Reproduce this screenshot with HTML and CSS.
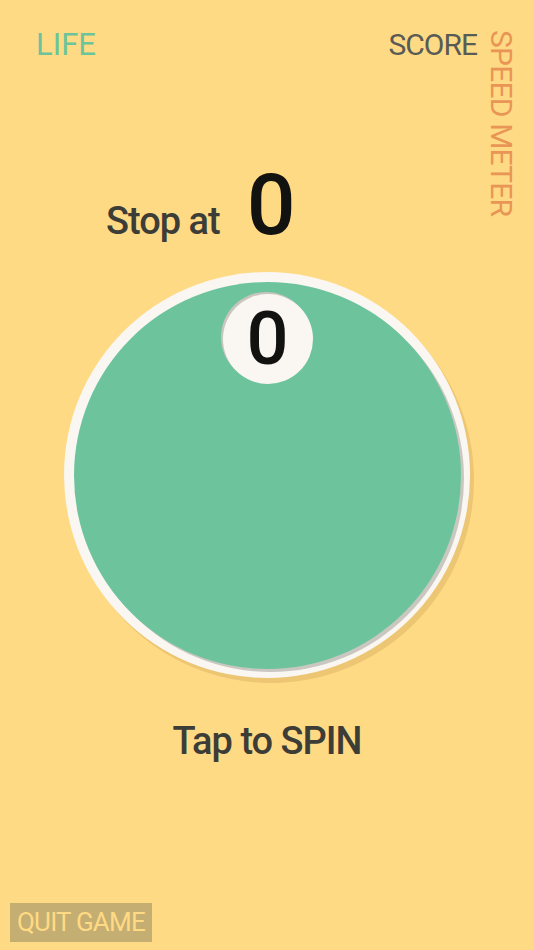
FILE: index.html
```
<!DOCTYPE html>
<html>
<head>
<meta charset="utf-8">
<link rel="stylesheet" href="styles.css">
</head>
<body>
<div class="screen">
  <header class="top">
    <div class="life">LIFE</div>
    <div class="right">
      <div class="score">SCORE</div>
      <div class="speed">SPEED METER</div>
    </div>
  </header>
  <div class="stop-row">
    <span class="stop-label">Stop at</span>
    <span class="stop-num">0</span>
  </div>
  <div class="wheel">
    <div class="wheel-face">
      <div class="ball">0</div>
    </div>
  </div>
  <div class="tap">Tap to SPIN</div>
  <div class="footer">
    <button class="quit">QUIT GAME</button>
  </div>
</div>
</body>
</html>
```
FILE: styles.css
```
html, body {
  margin: 0;
  padding: 0;
}
body {
  background: #FFDA84;
  font-family: Roboto, "Liberation Sans", sans-serif;
}
.screen {
  display: flex;
  flex-direction: column;
  min-height: 950px;
  width: 534px;
}
.top {
  display: flex;
  justify-content: space-between;
  align-items: flex-start;
  height: 161px;
  box-sizing: border-box;
  padding: 29px 18px 0 36px;
  font-size: 30px;
  line-height: 1;
}
.life {
  color: #6CC49A;
  font-size: 31px;
  line-height: 31px;
}
.right {
  display: flex;
  align-items: flex-start;
  gap: 9px;
}
.score {
  color: #595B55;
  letter-spacing: -1px;
  line-height: 31px;
}
.speed {
  color: #E99556;
  writing-mode: vertical-rl;
  letter-spacing: -0.8px;
  line-height: 30px;
  margin-top: 1px;
}
.stop-row {
  display: flex;
  align-items: baseline;
  gap: 27px;
  padding-left: 106px;
  height: 88px;
}
.stop-label {
  font-size: 38px;
  font-weight: 500;
  letter-spacing: -1px;
  color: #3D3D38;
  line-height: 1;
}
.stop-num {
  font-size: 86px;
  font-weight: 500;
  letter-spacing: -2px;
  color: #121210;
  line-height: 88px;
}
.wheel {
  align-self: center;
  margin-top: 23px;
  width: 406px;
  height: 406px;
  box-sizing: border-box;
  padding: 10px 9px 9px 10px;
  border-radius: 50%;
  background: #FAF7F2;
  box-shadow: 4px 5px 0 #EDC673;
}
.wheel-face {
  width: 387px;
  height: 387px;
  border-radius: 50%;
  background: #6DC49C;
  box-shadow: 3px 3px 0 #CAC6C0;
  display: flex;
  justify-content: center;
  align-items: flex-start;
  padding-top: 12px;
  box-sizing: border-box;
}
.ball {
  width: 90px;
  height: 90px;
  border-radius: 50%;
  background: #FAF7F2;
  box-shadow: -2px -2px 0 #C9C5BF;
  text-align: center;
  font-size: 74px;
  font-weight: 500;
  line-height: 90px;
  color: #121210;
}
.tap {
  margin-top: 44px;
  text-align: center;
  font-size: 38px;
  font-weight: 500;
  letter-spacing: -1px;
  color: #3D3D38;
  line-height: 1;
}
.footer {
  margin-top: auto;
  padding: 0 0 8px 10px;
}
.quit {
  display: block;
  margin: 0;
  border: 0;
  height: 39px;
  padding: 0 7px;
  background: #C5AE72;
  color: #FFDA84;
  font-family: Roboto, "Liberation Sans", sans-serif;
  font-size: 26px;
  letter-spacing: -0.8px;
  line-height: 39px;
}
```
